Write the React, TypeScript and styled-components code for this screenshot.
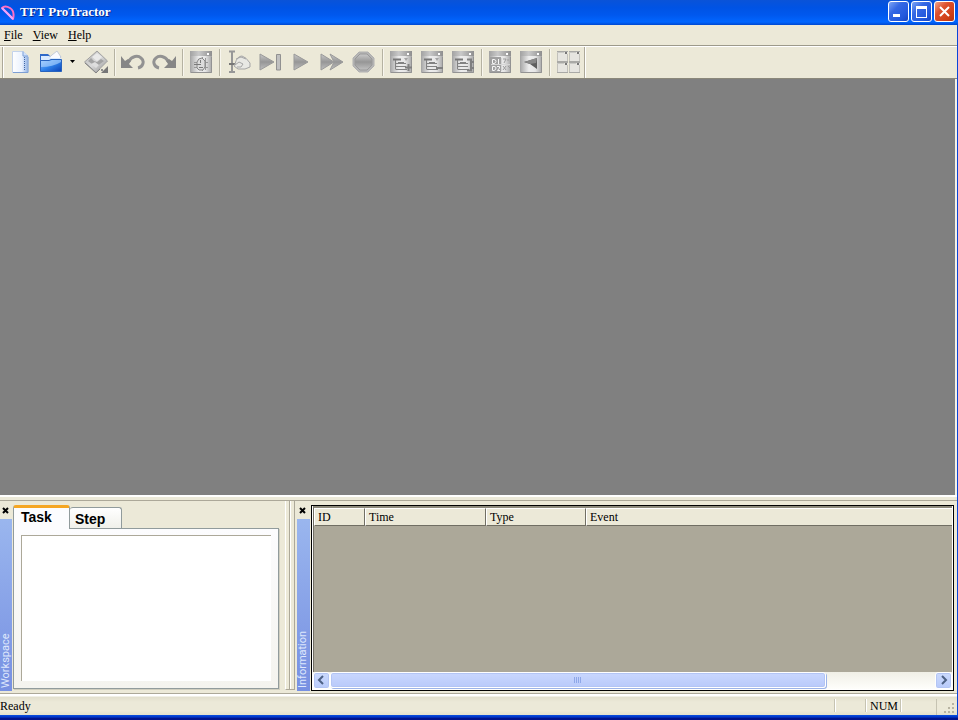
import React, { useState } from "react";
import styled, { createGlobalStyle, css } from "styled-components";

const Global = createGlobalStyle`
  * { box-sizing: border-box; }
  html, body { margin: 0; padding: 0; }
  body { background: #ece9d8; color: #000; font: 12px/16px "Liberation Serif", serif; }
  button { font: inherit; color: inherit; padding: 0; border: 0; background: none; }
`;

const Window = styled.div`
  display: flex;
  flex-direction: column;
  height: 100vh;
  min-height: 400px;
  overflow: hidden;
`;

const TitleBar = styled.header`
  display: flex;
  align-items: center;
  flex: none;
  height: 25px;
  padding: 0 3px 2px 0;
  background: linear-gradient(#0a53d8 0, #0053e4 30%, #0058ee 60%, #0166ff 88%, #0048d0 100%);
`;

const Title = styled.h1`
  flex: 1;
  margin: 0 0 0 4px;
  color: #fff;
  font-size: 13px;
  line-height: 16px;
  font-weight: bold;
  text-shadow: 1px 1px 0 #06278c;
`;

const WindowButtons = styled.div`
  display: flex;
  gap: 2px;
`;

const WindowButton = styled.button<{ $danger?: boolean }>`
  width: 21px;
  height: 21px;
  border: 1px solid #fff;
  border-radius: 3px;
  background: ${(p) =>
    p.$danger
      ? "linear-gradient(135deg, #f0a58c, #dd5230 35%, #cf3f16 75%, #b63510)"
      : "linear-gradient(135deg, #7ea5f5, #3568e4 35%, #2258dd 75%, #1745c0)"};
  svg { display: block; }
`;

const Frame = styled.div`
  display: flex;
  flex-direction: column;
  flex: 1;
  min-height: 0;
  border-right: 1px solid #0a46d8;
`;

const MenuBar = styled.nav`
  display: flex;
  flex: none;
  gap: 10px;
  height: 21px;
  padding: 2px 4px;
  border-bottom: 1px solid #9d9a8b;
`;

const MenuItem = styled.button`
  line-height: 16px;
`;

const Toolbar = styled.div`
  display: flex;
  align-items: stretch;
  flex: none;
  height: 33px;
  border-top: 1px solid #fff;
  border-bottom: 1px solid #8b887a;
`;

const ToolBand = styled.div`
  display: flex;
  align-items: stretch;
  margin-left: 2px;
  padding: 0 1px;
  border-left: 1px solid #aca899;
  border-right: 1px solid #aca899;
  box-shadow: inset 1px 0 #fff, 1px 0 #fff;
`;

const ToolGroup = styled.div`
  display: flex;
  padding: 0 1px;
`;

const Divider = styled.span`
  width: 2px;
  margin: 2px 1px 2px 3px;
  border-left: 1px solid #b5b2a2;
  border-right: 1px solid #f8f6ee;
`;

const ToolButton = styled.button<{ $narrow?: boolean }>`
  display: flex;
  align-items: center;
  justify-content: center;
  width: ${(p) => (p.$narrow ? 12 : 31)}px;
  margin-right: ${(p) => (p.$narrow ? 2 : 0)}px;
  padding-bottom: 2px;
  svg { display: block; flex: none; }
`;

const MdiArea = styled.main`
  flex: 1;
  min-height: 0;
  margin-right: 2px;
  background: #808080;
  box-shadow: 2px 0 #f4f2e8;
`;

const DockEdge = styled.div`
  flex: none;
  height: 6px;
  border-top: 2px solid #fff;
  border-bottom: 1px solid #aca899;
`;

const DockRow = styled.section`
  display: flex;
  flex: none;
  height: 192px;
`;

const Dock = styled.div<{ $fill?: boolean }>`
  display: flex;
  padding-bottom: 2px;
  ${(p) =>
    p.$fill
      ? css`flex: 1; min-width: 0; padding-left: 2px; padding-right: 3px;`
      : css`flex: 0 0 285px;`}
`;

const Caption = styled.div`
  display: flex;
  flex-direction: column;
  flex: none;
  width: 13px;
`;

const DockClose = styled.button`
  flex: none;
  height: 18px;
  padding: 6px 0 4px 2px;
  svg { display: block; }
`;

const CaptionLabel = styled.h2<{ $trim?: boolean }>`
  flex: 1;
  margin: 0 ${(p) => (p.$trim ? 1 : 0)}px 0 0;
  padding-top: 3px;
  writing-mode: vertical-rl;
  transform: rotate(180deg);
  color: #dfe8fc;
  background: linear-gradient(#7790e2, #9ab6ee);
  font: 11px/12px Roboto, sans-serif;
`;

const TabControl = styled.div`
  display: flex;
  flex-direction: column;
  flex: 1;
  margin: 4px 6px 2px 0;
`;

const TabList = styled.div`
  display: flex;
  align-items: flex-end;
  height: 23px;
`;

const Tab = styled.button<{ $active: boolean }>`
  position: relative;
  border: 1px solid #919b9c;
  border-radius: 3px 3px 0 0;
  font: bold 14px/18px "Liberation Sans", sans-serif;
  text-align: left;
  ${(p) =>
    p.$active
      ? css`
          z-index: 1;
          width: 57px;
          height: 24px;
          margin-bottom: -1px;
          padding: 0 0 3px 7px;
          border-top: 3px solid #f5a623;
          border-bottom: 0;
          background: #fcfcfe;
        `
      : css`
          width: 52px;
          height: 21px;
          padding: 2px 0 0 5px;
          border-left: 0;
          border-bottom: 0;
          background: linear-gradient(#fff, #f0f0ea);
        `}
`;

const TabPage = styled.div`
  flex: 1;
  padding: 6px 7px 7px;
  border: 1px solid #919b9c;
  background: linear-gradient(#fcfcfe, #f4f3ee);
  box-shadow: 1px 1px #d0cebf;
`;

const TaskList = styled.div`
  height: 100%;
  border-top: 1px solid #aca899;
  border-left: 1px solid #aca899;
  background: #fff;
`;

const Splitter = styled.div`
  flex: 0 0 10px;
  margin: 0 0 3px;
  border-left: 1px solid #fff;
  border-right: 1px solid #aca899;
  border-bottom: 1px solid #aca899;
  background: linear-gradient(90deg, #0000 3px, #aca899 3px, #aca899 4px, #fff 4px, #fff 5px, #0000 5px);
`;

const ListFrame = styled.div`
  display: flex;
  flex-direction: column;
  flex: 1;
  min-width: 0;
  margin: 4px 0 0 1px;
  padding: 0 1px 1px;
  border: 1px solid #000;
  background: #fff;
`;

const ListBody = styled.div`
  flex: 1;
  border-top: 2px solid #8d8a7c;
  border-left: 1px solid #716f64;
  background: #aca899;
`;

const LogTable = styled.table`
  width: 100%;
  table-layout: fixed;
  border-collapse: separate;
  border-spacing: 0;
`;

const LogHead = styled.th<{ $width?: number }>`
  width: ${(p) => (p.$width ? `${p.$width}px` : "auto")};
  height: 18px;
  padding: 0 4px 0 3px;
  border: 1px solid #fff;
  border-right-color: #716f64;
  border-bottom-color: #716f64;
  background: #ece9d8;
  text-align: left;
  font-weight: normal;
  line-height: 16px;
  &:last-child { border-right: 0; }
`;

const ScrollBar = styled.div`
  display: flex;
  flex: none;
  height: 17px;
  background: linear-gradient(#f0efe6, #fefefb);
`;

const ScrollButton = styled.button`
  width: 17px;
  border: 1px solid #fff;
  border-radius: 3px;
  background: linear-gradient(#cbdafd, #b8cafa);
  box-shadow: inset 0 0 0 1px #b3c5f4;
  svg { display: block; }
`;

const ScrollTrack = styled.div`
  flex: 1;
`;

const ScrollThumb = styled.div`
  display: flex;
  align-items: center;
  justify-content: center;
  width: 82%;
  height: 16px;
  border: 1px solid #fff;
  border-radius: 3px;
  background: linear-gradient(#c9d7fe, #b9cafa);
  box-shadow: inset 0 0 0 1px #b3c5f4, 1px 1px #9db4e8;
`;

const StatusBar = styled.footer`
  display: flex;
  flex: none;
  height: 22px;
  border-top: 1px solid #aca899;
  background: linear-gradient(#fff 0 2px, #e2dfcd 3px, #ece9d8 8px, #ece9d8 80%, #e2dfcd);
`;

const StatusText = styled.div<{ $width?: number }>`
  flex: ${(p) => (p.$width ? `0 0 ${p.$width}px` : "1")};
  margin: 5px 0 3px;
  line-height: 14px;
  ${(p) => p.$width && css`padding-left: 4px; border-left: 1px solid #c6c3b2; box-shadow: inset 1px 0 #fff;`}
`;

const StatusGrip = styled.div`
  flex: 0 0 21px;
  border-left: 1px solid #c6c3b2;
  margin: 5px 0 0;
  svg { display: block; }
`;

const BottomEdge = styled.div`
  flex: none;
  height: 5px;
  background: linear-gradient(#0a50e0, #0035c8 40%, #00138c 70%);
`;

type Art = { children: React.ReactNode };
const Icon = ({ children }: Art) => (
  <svg width="24" height="24" viewBox="0 0 24 24" fill="none" aria-hidden="true">{children}</svg>
);

const NewIcon = () => (
  <Icon>
    <defs><linearGradient id="pg"><stop stopColor="#fff" /><stop offset=".6" stopColor="#eaf2ff" /><stop offset="1" stopColor="#8fb1e4" /></linearGradient></defs>
    <path d="M4.500 1.500H15L20 6V22.500H4.500Z" fill="url(#pg)" stroke="#c3d3ec" />
    <path d="M15 1.500V6H20" fill="#cfe0fa" stroke="#7ea2d8" />
    <path d="M20 7V22.500H5" stroke="#7d9fd3" />
    <path d="M16.500 7V20" stroke="#3f66a8" strokeDasharray="1 1" />
  </Icon>
);

const FolderIcon = () => (
  <Icon>
    <defs><linearGradient id="fd" x2="1" y2="1"><stop stopColor="#8fc2ff" /><stop offset=".5" stopColor="#2f82ea" /><stop offset="1" stopColor="#0a41b5" /></linearGradient></defs>
    <path d="M1 4H9L11 6H22V20H1Z" fill="#2f69c8" />
    <path d="M8 9L18 1L22 7L18 12Z" fill="#fafbff" stroke="#c4cbd9" />
    <path d="M2 6H10L12 8H22V11H2Z" fill="#d9eaff" />
    <path d="M1.500 10.500H10L12 9.500H22.500V21.500H1.500Z" fill="url(#fd)" stroke="#2863bd" />
    <path d="M2 11H11L13 10H22V12Q14 17 2 17Z" fill="#b6d9ff" opacity=".6" />
  </Icon>
);

const SaveIcon = () => (
  <Icon>
    <defs><linearGradient id="sv" x2="1" y2="1"><stop stopColor="#b5b5b5" /><stop offset=".5" stopColor="#dadada" /><stop offset="1" stopColor="#8c8c8c" /></linearGradient></defs>
    <path d="M.5 12L13 1L23.500 11L12 22.500Z" fill="url(#sv)" stroke="#a0a0a0" />
    <path d="M8 7L13 3L18 7L13 11Z" fill="#e9e9e9" />
    <path d="M4 11L7 8L10 11L13 12L17 9L20 11L12 17Z" fill="#a3a3a3" />
    <path d="M7 14L11 12L15 15L12 18Z" fill="#dedede" />
    <path d="M1 13L12 23L16 19" stroke="#858585" />
    <path d="M24 16V23H17Z" fill="#777" />
    <path d="M17 19H19V21H17Z" fill="#8c8c8c" />
  </Icon>
);

const UndoIcon = ({ flip }: { flip?: boolean }) => (
  <Icon>
    <g transform={flip ? "matrix(-1 0 0 1 24 0)" : undefined}>
      <path d="M8 11C11 6 17 5 20 8C24 11 22 17 17 18" stroke="#929292" strokeWidth="3" />
      <path d="M0 6V18H12L8 14L10 11L7 9L4 11Z" fill="#868686" />
    </g>
  </Icon>
);

const Panel = ({ children }: Art) => (
  <Icon>
    <defs>
      <linearGradient id="pn"><stop stopColor="#a9a9a9" /><stop offset=".4" stopColor="#ededed" /><stop offset=".7" stopColor="#e6e6e6" /><stop offset="1" stopColor="#aaa" /></linearGradient>
      <linearGradient id="ph"><stop stopColor="#a2a2a2" /><stop offset=".4" stopColor="#c9c9c9" /><stop offset="1" stopColor="#8f8f8f" /></linearGradient>
    </defs>
    <path d="M1.500 1.500H22.500V22.500H1.500Z" fill="url(#pn)" stroke="#a6a6a6" />
    <path d="M1 1H23V6H1Z" fill="url(#ph)" />
    <path d="M18 3H20V5H18Z" fill="#fff" />
    <path d="M2 22.500H22.500V7" stroke="#939393" />
    {children}
  </Icon>
);

const HandPanelIcon = () => (
  <Panel>
    <path d="M13.500 7V21M16.500 8V20M5 12.500H19M5 17.500H19" stroke="#999" />
    <path d="M8 18V12Q9 8 13 8L16 11V17L14 20H10Z" fill="#dcdcdc" stroke="#858585" />
    <path d="M5 14.500H12M10 17.500H14M11.500 10V13" stroke="#7a7a7a" />
  </Panel>
);

const TreePanelIcon = ({ kind }: { kind: "add" | "remove" | "range" }) => (
  <Panel>
    <path d="M4 9.500H12" stroke="#777" strokeWidth="2" />
    <path d="M6.500 10V19.500M7 13.500H17M7 16.500H17M7 19.500H18M9 12.500H15" stroke="#828282" />
    {kind === "add" && <path d="M16 17.500H23M19.500 14V21" stroke="#808080" strokeWidth="2" />}
    {kind === "remove" && <path d="M16 18H23" stroke="#808080" strokeWidth="2" />}
    {kind === "range" && <path d="M16 9.500H20V20.500H16M20 12H23M20 18H23" stroke="#808080" strokeWidth="2" />}
    {kind !== "range" && <path d="M15 8H19L17 11Z" fill="#a5a5a5" />}
  </Panel>
);

const DataPanelIcon = () => (
  <Panel>
    <path d="M2 7H13V22H2Z" fill="#a0a0a0" />
    <path d="M4.500 9.500H6Q8 9.500 8 11.500Q8 13 6 13.500H4.500ZM10.500 9V14M4.500 16.500H6Q8 16.500 8 18Q8 20 6 20.500H4.500ZM9 16.500H11.500V18L9.500 20.500H12" stroke="#f7f7f7" />
    <path d="M15 9H18L16 13M20 9V11M15 16L18 20M18 16L15 20M20 16L22 18" stroke="#9c9c9c" />
    <path d="M3 14.500H22M13.500 8V21" stroke="#d5d5d5" />
  </Panel>
);

const FilterPanelIcon = () => (
  <Panel><path d="M5 12L18 8L18 19L11 14Z" fill="#5f5f5f" /><path d="M5 12L18 8L17 13L11 14Z" fill="#888" /></Panel>
);

const HandIcon = () => (
  <Icon>
    <path d="M2 1.500H8M5 1.500V22M2 22H8" stroke="#979797" strokeWidth="2" />
    <path d="M2 14H9" stroke="#777" strokeWidth="2" />
    <path d="M8 14Q10 6 15 6Q19 7 23 13V17L18 19H11L7 16Z" fill="#e8e8e4" stroke="#a5a5a5" />
    <path d="M9 9L14 7L19 9M8 15L12 12L16 14L14 17L10 17" stroke="#a5a5a5" />
  </Icon>
);

const PlayShades = () => (
  <defs><linearGradient id="pl" x2="0" y2="1"><stop stopColor="#c9c9c9" /><stop offset=".5" stopColor="#969696" /><stop offset="1" stopColor="#c0c0c0" /></linearGradient></defs>
);
const StepIcon = () => (
  <Icon><PlayShades /><path d="M2 4L16 12L2 20Z" fill="url(#pl)" stroke="#999" /><path d="M18.500 4.500H22.500V20H18.500Z" fill="#c0c0c0" stroke="#919191" /></Icon>
);
const PlayIcon = () => (
  <Icon><PlayShades /><path d="M5 4L19 12L5 20Z" fill="url(#pl)" stroke="#999" /></Icon>
);
const ForwardIcon = () => (
  <Icon><PlayShades /><path d="M1 4L14 12L1 20Z" fill="url(#pl)" stroke="#999" /><path d="M10 4L23 12L10 20L14 12Z" fill="url(#pl)" stroke="#999" /></Icon>
);
const StopIcon = () => (
  <Icon><PlayShades /><path d="M8 2H17L23 8V16L17 22H8L2 16V8Z" fill="#b5b5b5" stroke="#b0b0b0" /><path d="M9 4H16L21 9V15L16 20H9L4 15V9Z" fill="url(#pl)" stroke="#999" /></Icon>
);
const TileIcon = () => (
  <Icon>
    {[[1, 1], [13, 1], [1, 12], [13, 12]].map(([x, y]) => (
      <g key={`${x}-${y}`} transform={`translate(${x} ${y})`}>
        <path d="M0 0H11V10H0Z" fill="#e6e5e0" />
        <path d="M.5 0V10M10.500 3V10" stroke="#c2c1bb" />
        <path d="M0 .5H11M0 10.500H11" stroke="#a9a9a6" />
        <path d="M0 1.500H7" stroke="#c9c9c5" />
        <path d="M8 1H10V3H8Z" fill="#777" />
      </g>
    ))}
  </Icon>
);

const CloseMark = () => (
  <svg width="8" height="8" viewBox="0 0 8 8" aria-hidden="true"><path d="M1 1L6 6M6 1L1 6" stroke="#000" strokeWidth="2" /></svg>
);

const columns: { name: string; width?: number }[] = [
  { name: "ID", width: 51 },
  { name: "Time", width: 121 },
  { name: "Type", width: 100 },
  { name: "Event" },
];

const tabs = ["Task", "Step"];

export default function App() {
  const [active, setActive] = useState("Task");
  return (
    <Window>
      <Global />
      <TitleBar>
        <svg width="16" height="18" viewBox="0 0 16 18" fill="none" aria-hidden="true">
          <path d="M2 5Q5 2 10 5Q15 8 13 16Z" stroke="#ff6fc4" strokeWidth="2" strokeLinejoin="round" />
          <path d="M2 5L13 16" stroke="#e9a4ff" strokeWidth="2" />
        </svg>
        <Title>TFT ProTractor</Title>
        <WindowButtons>
          <WindowButton aria-label="Minimize"><svg width="19" height="19"><path d="M4 12H11V15H4Z" fill="#fff" /></svg></WindowButton>
          <WindowButton aria-label="Maximize"><svg width="19" height="19"><path d="M4 4H15V16H4ZM5 7V15H14V7Z" fill="#fff" fillRule="evenodd" /></svg></WindowButton>
          <WindowButton $danger aria-label="Close"><svg width="19" height="19"><path d="M5 5L14 14M14 5L5 14" stroke="#fff" strokeWidth="2" /></svg></WindowButton>
        </WindowButtons>
      </TitleBar>
      <Frame>
        <MenuBar>
          <MenuItem><u>F</u>ile</MenuItem>
          <MenuItem><u>V</u>iew</MenuItem>
          <MenuItem><u>H</u>elp</MenuItem>
        </MenuBar>
        <Toolbar role="toolbar">
          <ToolBand>
            <ToolButton aria-label="New"><NewIcon /></ToolButton>
            <ToolButton aria-label="Open"><FolderIcon /></ToolButton>
            <ToolButton $narrow aria-label="Open recent"><svg width="5" height="3"><path d="M0 0H5L2.500 3Z" fill="#000" /></svg></ToolButton>
            <ToolButton aria-label="Save"><SaveIcon /></ToolButton>
            <Divider />
            <ToolButton aria-label="Undo"><UndoIcon /></ToolButton>
            <ToolButton aria-label="Redo"><UndoIcon flip /></ToolButton>
            <Divider />
            <ToolButton aria-label="Manual panel"><HandPanelIcon /></ToolButton>
            <Divider />
            <ToolGroup>
              <ToolButton aria-label="Manual"><HandIcon /></ToolButton>
              <ToolButton aria-label="Step"><StepIcon /></ToolButton>
              <ToolButton aria-label="Run"><PlayIcon /></ToolButton>
              <ToolButton aria-label="Run all"><ForwardIcon /></ToolButton>
              <ToolButton aria-label="Stop"><StopIcon /></ToolButton>
            </ToolGroup>
            <Divider />
            <ToolButton aria-label="Add item"><TreePanelIcon kind="add" /></ToolButton>
            <ToolButton aria-label="Remove item"><TreePanelIcon kind="remove" /></ToolButton>
            <ToolButton aria-label="Group items"><TreePanelIcon kind="range" /></ToolButton>
            <Divider />
            <ToolButton aria-label="Data"><DataPanelIcon /></ToolButton>
            <ToolButton aria-label="Chart"><FilterPanelIcon /></ToolButton>
            <Divider />
            <ToolButton aria-label="Tile windows"><TileIcon /></ToolButton>
          </ToolBand>
        </Toolbar>
        <MdiArea />
        <DockEdge />
        <DockRow>
          <Dock>
            <Caption>
              <DockClose aria-label="Close workspace"><CloseMark /></DockClose>
              <CaptionLabel $trim>Workspace</CaptionLabel>
            </Caption>
            <TabControl>
              <TabList role="tablist">
                {tabs.map((name) => (
                  <Tab key={name} role="tab" aria-selected={name === active} $active={name === active} onClick={() => setActive(name)}>{name}</Tab>
                ))}
              </TabList>
              <TabPage role="tabpanel"><TaskList /></TabPage>
            </TabControl>
          </Dock>
          <Splitter />
          <Dock $fill>
            <Caption>
              <DockClose aria-label="Close information"><CloseMark /></DockClose>
              <CaptionLabel>Information</CaptionLabel>
            </Caption>
            <ListFrame>
              <ListBody>
                <LogTable>
                  <thead>
                    <tr>{columns.map((c) => <LogHead key={c.name} scope="col" $width={c.width}>{c.name}</LogHead>)}</tr>
                  </thead>
                </LogTable>
              </ListBody>
              <ScrollBar>
                <ScrollButton aria-label="Scroll left"><svg width="15" height="15"><path d="M9 3L5 7L9 11" fill="none" stroke="#4d6185" strokeWidth="2" /></svg></ScrollButton>
                <ScrollTrack>
                  <ScrollThumb><svg width="8" height="6"><path d="M.5 0V6M2.500 0V6M4.500 0V6M6.500 0V6" stroke="#8ea7e8" /></svg></ScrollThumb>
                </ScrollTrack>
                <ScrollButton aria-label="Scroll right"><svg width="15" height="15"><path d="M6 3L10 7L6 11" fill="none" stroke="#4d6185" strokeWidth="2" /></svg></ScrollButton>
              </ScrollBar>
            </ListFrame>
          </Dock>
        </DockRow>
        <StatusBar>
          <StatusText>Ready</StatusText>
          <StatusText $width={31} />
          <StatusText $width={35}>NUM</StatusText>
          <StatusText $width={36} />
          <StatusGrip>
            <svg width="20" height="15" aria-hidden="true">
              <path d="M15 4h2v2h-2zM11 8h2v2h-2zM15 8h2v2h-2zM7 12h2v2h-2zM11 12h2v2h-2zM15 12h2v2h-2z" fill="#b8b4a2" />
            </svg>
          </StatusGrip>
        </StatusBar>
      </Frame>
      <BottomEdge />
    </Window>
  );
}
